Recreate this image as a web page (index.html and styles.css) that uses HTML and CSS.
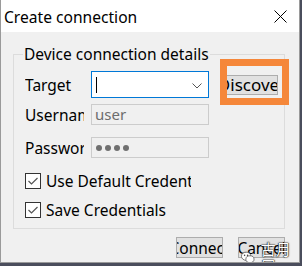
FILE: index.html
```html
<!DOCTYPE html>
<html lang="en">
<head>
  <meta charset="UTF-8">
  <title>Create connection</title>
  <link rel="stylesheet" href="styles.css">
</head>
<body>

<div class="window">
  <div class="titlebar">
    <span class="title">Create connection</span>
    <svg class="close" width="13" height="13" viewBox="0 0 13 13">
      <path d="M0.5 0.5 L12.5 12.5 M12.5 0.5 L0.5 12.5" stroke="#000" stroke-width="1" fill="none"/>
    </svg>
  </div>

  <div class="content">
    <fieldset class="group">
      <legend>Device connection details</legend>

      <div class="row row-target">
        <span class="label">Target</span>
        <div class="combo">
          <span class="caret"></span>
          <svg class="chevron" width="10" height="6" viewBox="0 0 10 6">
            <path d="M0.5 0.5 L5 5 L9.5 0.5" stroke="#555" stroke-width="1" fill="none"/>
          </svg>
        </div>
        <div class="btn btn-discover"><span>Discover</span></div>
      </div>

      <div class="row row-user">
        <span class="label">Username</span>
        <div class="field">user</div>
      </div>

      <div class="row row-pass">
        <span class="label">Password</span>
        <div class="field dots">
          <i></i><i></i><i></i><i></i>
        </div>
      </div>

      <div class="check check-first">
        <svg class="box" width="16" height="16" viewBox="0 0 16 16">
          <rect x="0.5" y="0.5" width="15" height="15" fill="#fff" stroke="#333"/>
          <path d="M3.5 8 L6.5 11 L12.5 5" stroke="#555" stroke-width="1.2" fill="none"/>
        </svg>
        <span>Use Default Credentials</span>
      </div>

      <div class="check">
        <svg class="box" width="16" height="16" viewBox="0 0 16 16">
          <rect x="0.5" y="0.5" width="15" height="15" fill="#fff" stroke="#333"/>
          <path d="M3.5 8 L6.5 11 L12.5 5" stroke="#555" stroke-width="1.2" fill="none"/>
        </svg>
        <span>Save Credentials</span>
      </div>
    </fieldset>

    <div class="footer">
      <div class="btn btn-foot"><span>Connect</span></div>
      <div class="btn btn-foot"><span>Cancel</span></div>
    </div>
  </div>

  <div class="highlight"></div>

  <div class="watermark">
    <svg width="16" height="15" viewBox="0 0 16 15">
      <ellipse cx="6" cy="6" rx="5.5" ry="4.8" fill="#fff" stroke="#555" stroke-width="0.9"/>
      <ellipse cx="10.5" cy="9.5" rx="4.8" ry="4" fill="#fff" stroke="#555" stroke-width="0.9"/>
      <circle cx="4.2" cy="5" r="0.9" fill="#444"/>
      <circle cx="7.7" cy="5" r="0.9" fill="#444"/>
    </svg>
    <span>古月居</span>
  </div>
</div>

</body>
</html>
```

FILE: styles.css
```css
body {
  margin: 0;
  background: #4a4d5c;
  font-family: "Noto Sans", "Open Sans", sans-serif;
  color: #000;
}
.window {
  position: relative;
  width: 298px;
  height: 262px;
  border: 1px solid #9a9a9a;
  border-top: none;
  background: #f0f0f0;
  overflow: hidden;
}
.titlebar {
  height: 32px;
  background: #fff;
  display: flex;
  align-items: center;
  justify-content: space-between;
  padding: 0 12px 0 3px;
}
.title {
  font-size: 15.6px;
  line-height: 18px;
  margin-top: 1px;
}
.close {
  display: block;
}
.content {
  padding: 14px 0 0 12px;
}
.group {
  width: 272px;
  height: 183px;
  margin: 0;
  padding: 0 0 0 11px;
  border: 1px solid #dcdcdc;
  box-sizing: border-box;
}
.group legend {
  font-size: 15.5px;
  line-height: 16px;
  padding: 0 1px;
  margin-left: -2px;
}
.row {
  display: flex;
  align-items: center;
}
.label {
  width: 59px;
  margin-right: 7px;
  overflow: hidden;
  white-space: nowrap;
  font-size: 15.5px;
}
.row-target {
  height: 27px;
  margin-top: 9px;
}
.row-user {
  height: 21px;
  margin-top: 6px;
}
.row-pass {
  height: 21px;
  margin-top: 12px;
}
.combo {
  width: 118px;
  height: 27px;
  box-sizing: border-box;
  border: 1px solid #0078d7;
  background: #fff;
  display: flex;
  align-items: center;
  justify-content: space-between;
  padding: 0 6px 0 4px;
}
.caret {
  width: 1px;
  height: 16px;
  background: #000;
}
.chevron {
  display: block;
  margin-top: 2px;
}
.field {
  width: 118px;
  height: 21px;
  box-sizing: border-box;
  border: 1px solid #cccccc;
  background: #f0f0f0;
  color: #6d6d6d;
  font-size: 15px;
  line-height: 18px;
  padding-left: 3px;
}
.dots {
  display: flex;
  align-items: center;
  gap: 3px;
  padding-left: 4px;
}
.dots i {
  width: 6px;
  height: 6px;
  border-radius: 50%;
  background: #707070;
}
.btn {
  height: 20px;
  box-sizing: border-box;
  border: 1px solid #adadad;
  background: #e1e1e1;
  display: flex;
  justify-content: center;
  align-items: center;
  overflow: hidden;
  white-space: nowrap;
  font-size: 15.5px;
}
.btn span {
  flex-shrink: 0;
}
.btn-discover {
  width: 52px;
  margin-left: 17px;
  height: 20px;
  font-size: 17px;
}
.check {
  display: flex;
  align-items: center;
  height: 16px;
  margin-top: 13px;
  font-size: 15.5px;
  white-space: nowrap;
  overflow: hidden;
  width: 152px;
}
.check-first {
  margin-top: 15px;
  width: 166px;
}
.box {
  display: block;
  flex-shrink: 0;
  margin-right: 5px;
}
.footer {
  display: flex;
  justify-content: flex-end;
  gap: 15px;
  padding: 8px 14px 0 0;
}
.btn-foot {
  width: 47px;
  height: 21px;
}
.highlight {
  position: absolute;
  left: 219px;
  top: 59px;
  width: 69px;
  height: 46px;
  box-sizing: border-box;
  border: 7px solid #f5873a;
}
.watermark {
  position: absolute;
  left: 240px;
  top: 240px;
  display: flex;
  align-items: center;
  gap: 6px;
  color: #fff;
  font-family: "Noto Sans CJK SC", sans-serif;
  font-size: 15px;
  line-height: 17px;
  text-shadow: 0 0 2px #222, 0 0 1px #000, 0 0 1px #000;
}
.watermark svg {
  display: block;
}
```
